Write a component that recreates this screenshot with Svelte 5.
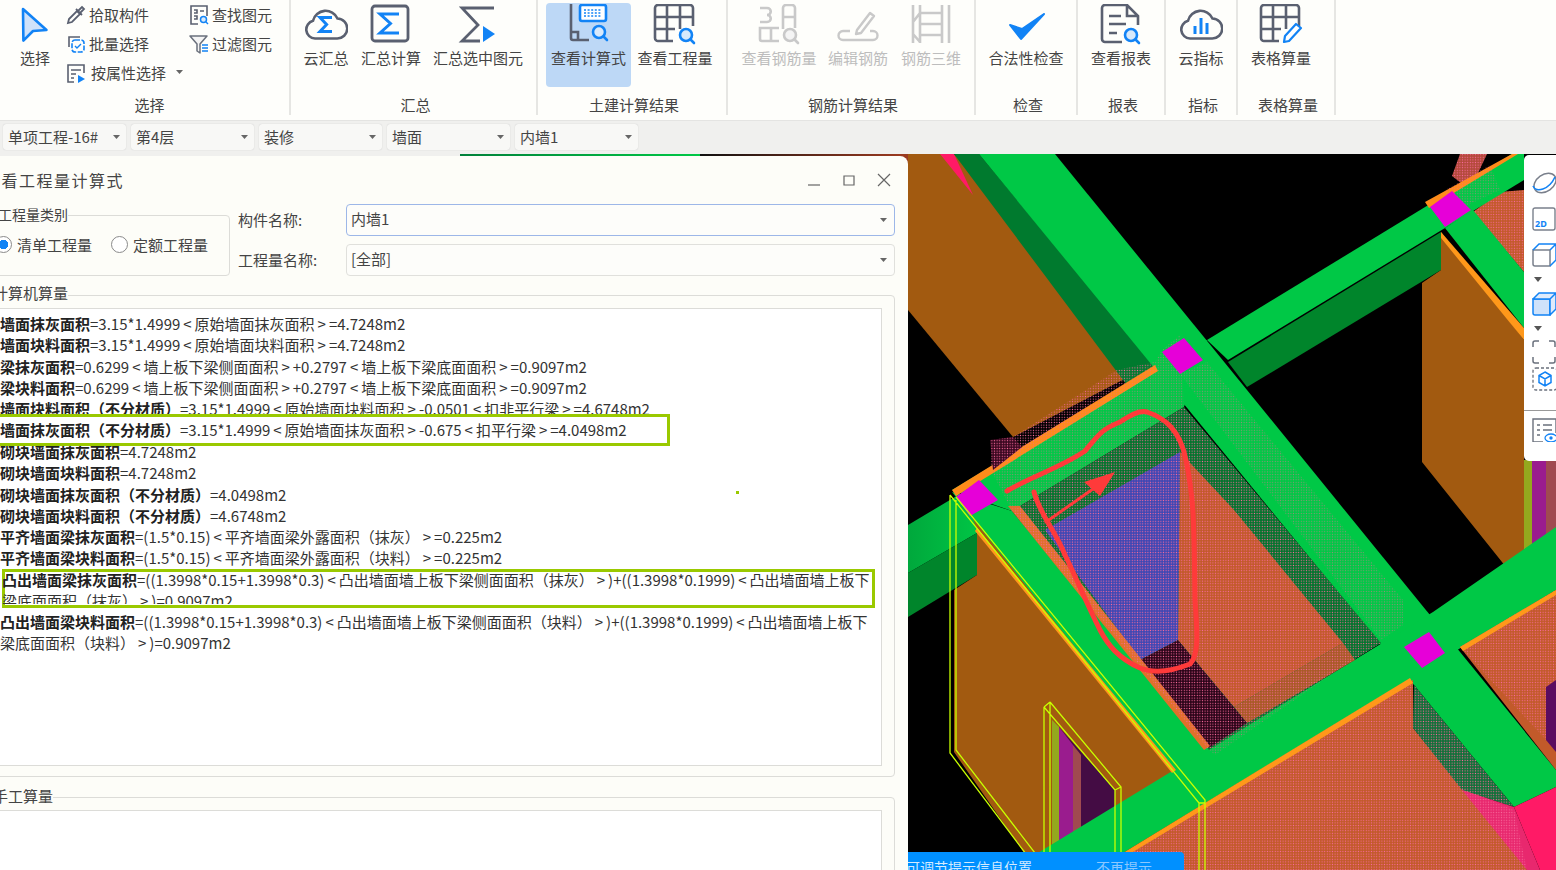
<script lang="ts">
  const groups = [
    { label: '选择', w: 291, items: [{ id: 'select', text: '选择', w: 54 }], small: true },
    { label: '汇总', w: 247, items: [
      { id: 'cloudsum', text: '云汇总', w: 54 },
      { id: 'sum', text: '汇总计算', w: 76 },
      { id: 'sumsel', text: '汇总选中图元', w: 98 },
    ] },
    { label: '土建计算结果', w: 190, items: [
      { id: 'formula', text: '查看计算式', w: 85, active: true },
      { id: 'qty', text: '查看工程量', w: 88 },
    ] },
    { label: '钢筋计算结果', w: 248, items: [
      { id: 'rebar', text: '查看钢筋量', w: 86, off: true },
      { id: 'editbar', text: '编辑钢筋', w: 72, off: true },
      { id: 'bar3d', text: '钢筋三维', w: 74, off: true },
    ] },
    { label: '检查', w: 102, items: [{ id: 'check', text: '合法性检查', w: 84 }] },
    { label: '报表', w: 88, items: [{ id: 'report', text: '查看报表', w: 70 }] },
    { label: '指标', w: 72, items: [{ id: 'cloudbar', text: '云指标', w: 54 }] },
    { label: '表格算量', w: 98, items: [{ id: 'sheet', text: '表格算量', w: 70 }] },
  ];

  const combos = ['单项工程-16#', '第4层', '装修', '墙面', '内墙1'];

  // the program pads its angle brackets, thin spaces get close enough
  const sp = (s: string) => s.replace(/</g, '\u2009<\u2009').replace(/>/g, '\u2009>\u2009');

  const beforeBox = [
    ['墙面抹灰面积', '=3.15*1.4999<原始墙面抹灰面积>=4.7248m2'],
    ['墙面块料面积', '=3.15*1.4999<原始墙面块料面积>=4.7248m2'],
    ['梁抹灰面积', '=0.6299<墙上板下梁侧面面积>+0.2797<墙上板下梁底面面积>=0.9097m2'],
    ['梁块料面积', '=0.6299<墙上板下梁侧面面积>+0.2797<墙上板下梁底面面积>=0.9097m2'],
  ];
  const middle = [
    ['砌块墙面抹灰面积', '=4.7248m2'],
    ['砌块墙面块料面积', '=4.7248m2'],
    ['砌块墙面抹灰面积（不分材质）', '=4.0498m2'],
    ['砌块墙面块料面积（不分材质）', '=4.6748m2'],
    ['平齐墙面梁抹灰面积', '=(1.5*0.15)<平齐墙面梁外露面积（抹灰）>=0.225m2'],
    ['平齐墙面梁块料面积', '=(1.5*0.15)<平齐墙面梁外露面积（块料）>=0.225m2'],
  ];
</script>

{#snippet sigma(x: number, y: number, w: number, h: number)}
  <path d="M{x + w} {y}H{x} l{w * 0.55} {h / 2} l-{w * 0.55} {h / 2} H{x + w}" fill="none" stroke="#1283f5" stroke-width="3" />
{/snippet}

{#snippet lens(cx: number, cy: number, col: string, fill: string)}
  <circle {cx} {cy} r="6" fill={fill} stroke={col} stroke-width="2.6" />
  <path d="M{cx + 4.5} {cy + 4.5}l3.5 3.5" stroke={col} stroke-width="2.6" stroke-linecap="round" />
{/snippet}

{#snippet grid(col: string)}
  <path d="M20 37H5a3 3 0 0 1-3-3V4a3 3 0 0 1 3-3h32a3 3 0 0 1 3 3v18M2 13h38M2 25h20M14 1v36M27 1v24" fill="none" stroke={col} stroke-width="2.6" />
{/snippet}

{#snippet icon(id: string)}
  <svg class="ic" viewBox="0 0 44 44" aria-hidden="true">
    {#if id === 'select'}
      <path d="M10 5L33.5 26L20 27L10.4 36.6Z" fill="#cfe2fa" stroke="#1283f5" stroke-width="2.6" stroke-linejoin="round" />
    {:else if id === 'cloudsum'}
      <path d="M11 34.5a9 9 0 0 1-2-17.7A13 13 0 0 1 33.5 14.5a10 10 0 0 1-.5 20Z" fill="none" stroke="#5a6070" stroke-width="2.6" />
      {@render sigma(16, 13.5, 12, 14)}
    {:else if id === 'sum'}
      <rect x="3" y="2" width="36" height="35" rx="3" fill="none" stroke="#5a6070" stroke-width="2.8" />
      {@render sigma(11, 10, 19, 19)}
    {:else if id === 'sumsel'}
      <path d="M38 4H6l16 17L6 37h18" fill="none" stroke="#5a6070" stroke-width="2.8" />
      <path d="M27 22l12 8-12 8Z" fill="#1283f5" />
    {:else if id === 'formula'}
      <path d="M4 0v34a2 2 0 0 0 2 2h16M4 28h7v8" fill="none" stroke="#5a6070" stroke-width="2.6" />
      <rect x="13" y="1" width="26" height="16" rx="2" fill="#fff" stroke="#1283f5" stroke-width="2.6" />
      <path d="M17 6h18M17 9h18M17 12h18" stroke="#1283f5" stroke-width="1.6" stroke-dasharray="2 1.6" />
      {@render lens(32, 28, '#1283f5', '#d8e9fb')}
    {:else if id === 'qty'}
      {@render grid('#5a6070')}
      {@render lens(33, 31, '#1283f5', '#d8e9fb')}
    {:else if id === 'rebar'}
      <path d="M22 37H5a2 2 0 0 1-2-2V24h19M14 24v13M3 18h7c5 0 5-7 0-7 5 0 5-7 0-7H3M26 25V4a3 3 0 0 1 3-3h6a3 3 0 0 1 3 3v20M26 13h12" fill="none" stroke="#c9c9c9" stroke-width="2.6" />
      {@render lens(33, 31, '#c9c9c9', '#f4f4f4')}
    {:else if id === 'editbar'}
      <path d="M21 26L34 9l4 3-13 17-5 1ZM14 27H7a4 4 0 0 0 0 9h30a4 4 0 0 0 0-9h-3" fill="none" stroke="#c9c9c9" stroke-width="2.4" stroke-linejoin="round" />
    {:else if id === 'bar3d'}
      <path d="M4 1v38M11 1v38M33 1v38M40 1v38M11 9h22M11 20h22M11 31h22M4 18l7-9M4 30l7 8" fill="none" stroke="#c9c9c9" stroke-width="2.6" />
    {:else if id === 'check'}
      <path d="M6 21l11 14L40 10 18 25Z" fill="#1283f5" stroke="#1283f5" stroke-width="2" stroke-linejoin="round" />
    {:else if id === 'report'}
      <path d="M23 38H6a3 3 0 0 1-3-3V4a3 3 0 0 1 3-3h22l11 11v9M28 1v11h11M10 12h12M10 20h17M10 29h8" fill="none" stroke="#5a6070" stroke-width="2.6" />
      {@render lens(32, 31, '#1283f5', '#d8e9fb')}
    {:else if id === 'cloudbar'}
      <path d="M11 34.5a9 9 0 0 1-2-17.7A13 13 0 0 1 33.5 14.5a10 10 0 0 1-.5 20Z" fill="none" stroke="#5a6070" stroke-width="2.6" />
      <path d="M16 22v8M22 14v16M28 19v11" stroke="#1283f5" stroke-width="3" />
    {:else if id === 'sheet'}
      {@render grid('#5a6070')}
      <path d="M25 38l1-6 11-12 5 4-12 13Z" fill="#fff" stroke="#1283f5" stroke-width="2.2" stroke-linejoin="round" />
    {/if}
  </svg>
{/snippet}

{#snippet chev()}
  <svg class="chev" viewBox="0 0 8 5" aria-hidden="true"><path d="M0 0h7L3.5 4Z" fill="#666" /></svg>
{/snippet}

<div class="page">
  <header class="ribbon">
    {#each groups as g}
      <section class="group" style="width:{g.w}px">
        <div class="group-body">
          {#each g.items as b}
            <button class="big" class:active={b.active} class:off={b.off} style="width:{b.w}px">
              {@render icon(b.id)}
              <span>{b.text}</span>
            </button>
          {/each}
          {#if g.small}
            <div class="small-col">
              <div class="small">
                <svg viewBox="0 0 20 20" aria-hidden="true"><path d="M2 18l1-4 8-8 3 3-8 8ZM10 4l6 6M12 6l4-4 2 2-4 4" fill="none" stroke="#5a6070" stroke-width="1.8" /></svg>
                拾取构件
              </div>
              <div class="small">
                <svg viewBox="0 0 20 20" aria-hidden="true"><path d="M3 13V3h11" fill="none" stroke="#5a6070" stroke-width="1.6" /><rect x="6" y="6" width="12" height="12" rx="3" fill="none" stroke="#1283f5" stroke-width="1.6" stroke-dasharray="5 1.5" /><path d="M9 12l2 2 4-4" fill="none" stroke="#1283f5" stroke-width="1.4" /></svg>
                批量选择
              </div>
              <div class="small wide">
                <svg viewBox="0 0 20 20" aria-hidden="true"><path d="M8 19H2V2h16v8M5 7h10M5 11h5M5 15h3" fill="none" stroke="#5a6070" stroke-width="1.6" /><path d="M12 12l7 4-7 4Z" fill="#1283f5" /></svg>
                按属性选择 {@render chev()}
              </div>
            </div>
            <div class="small-col second">
              <div class="small">
                <svg viewBox="0 0 20 20" aria-hidden="true"><path d="M9 19H2V1h16v10M5 5h3v3H5M11 6h4M5 11h3v3H5" fill="none" stroke="#5a6070" stroke-width="1.6" /><circle cx="14.5" cy="14.5" r="3" fill="#d8e9fb" stroke="#1283f5" stroke-width="1.5" /><path d="M17 17l2 2" stroke="#1283f5" stroke-width="1.5" /></svg>
                查找图元
              </div>
              <div class="small">
                <svg viewBox="0 0 20 20" aria-hidden="true"><path d="M1 2h17l-7 8v9l-3-2v-7Z" fill="#f4f4f4" stroke="#6a707c" stroke-width="1.5" stroke-linejoin="round" /><path d="M13 11h6M13 14h6M13 17h6" stroke="#1283f5" stroke-width="1.6" /></svg>
                过滤图元
              </div>
            </div>
          {/if}
        </div>
        <div class="group-label">{g.label}</div>
      </section>
    {/each}
  </header>

  <div class="filters">
    {#each combos as c}
      <div class="combo">{c} {@render chev()}</div>
    {/each}
  </div>

  <main class="main">
    <div class="dialog">
      <div class="title">
        <span>查看工程量计算式</span>
        <div class="win">
          <svg viewBox="0 0 14 14" aria-hidden="true"><path d="M1 12h12" stroke="#666" stroke-width="1.2" /></svg>
          <svg viewBox="0 0 14 14" aria-hidden="true"><path d="M2 3h10v9H2Z" fill="none" stroke="#666" stroke-width="1.2" /></svg>
          <svg viewBox="0 0 14 14" aria-hidden="true"><path d="M1 1l12 12M13 1L1 13" stroke="#666" stroke-width="1.2" /></svg>
        </div>
      </div>

      <div class="form">
        <div class="fs kind">
          <span class="legend">工程量类别</span>
          <label class="radio"><i class="dot on"></i>清单工程量</label>
          <label class="radio"><i class="dot"></i>定额工程量</label>
        </div>
        <div class="fields">
          <div class="field">
            <span class="fname">构件名称:</span>
            <div class="select focus">内墙1 {@render chev()}</div>
          </div>
          <div class="field">
            <span class="fname">工程量名称:</span>
            <div class="select">[全部] {@render chev()}</div>
          </div>
        </div>
      </div>

      <div class="fs calc">
        <span class="legend">计算机算量</span>
        <div class="lines">
          {#each beforeBox as r}
            <div class="row"><b>{r[0]}</b>{sp(r[1])}</div>
          {/each}
          <div class="row cut"><b>墙面块料面积（不分材质）</b>{sp('=3.15*1.4999<原始墙面块料面积>-0.0501<扣非平行梁>=4.6748m2')}</div>
          <div class="mark one">
            <div class="row"><b>墙面抹灰面积（不分材质）</b>{sp('=3.15*1.4999<原始墙面抹灰面积>-0.675<扣平行梁>=4.0498m2')}</div>
          </div>
          {#each middle as r}
            <div class="row"><b>{r[0]}</b>{sp(r[1])}</div>
          {/each}
          <div class="mark two">
            <div class="row"><b>凸出墙面梁抹灰面积</b>{sp('=((1.3998*0.15+1.3998*0.3)<凸出墙面墙上板下梁侧面面积（抹灰）>)+((1.3998*0.1999)<凸出墙面墙上板下')}</div>
            <div class="row cut2">{sp('梁底面面积（抹灰）>)=0.9097m2')}</div>
          </div>
          <div class="row"><b>凸出墙面梁块料面积</b>{sp('=((1.3998*0.15+1.3998*0.3)<凸出墙面墙上板下梁侧面面积（块料）>)+((1.3998*0.1999)<凸出墙面墙上板下')}</div>
          <div class="row">{sp('梁底面面积（块料）>)=0.9097m2')}</div>
          <i class="speck"></i>
        </div>
      </div>

      <div class="fs manual">
        <span class="legend">手工算量</span>
        <div class="lines blank"></div>
      </div>
    </div>

    <div class="viewport">
      <svg class="scene" viewBox="908 154 648 716" preserveAspectRatio="none" aria-hidden="true">
        <defs>
          <pattern id="dots" width="2.6" height="2.6" patternUnits="userSpaceOnUse">
            <circle cx="1.3" cy="1.3" r="0.62" fill="#f7689a" />
          </pattern>
          <linearGradient id="beamfade" x1="0" x2="1" y1="0" y2="0">
            <stop offset="0" stop-color="#00a83c" />
            <stop offset="1" stop-color="#00c846" />
          </linearGradient>
        </defs>

        <!-- back walls -->
        <polygon points="908,154 954,154 1155,363 1013,437 908,310" fill="#a25a10" />
        <polygon points="940,154 954,154 973,195" fill="#ff1a66" />
        <polygon points="954,154 979,154 1160,372 1126,384" fill="#007a2e" />
        <polygon points="1441,232 1524,340 1524,555 1506,567 1422,462 1422,283 1441,270" fill="#a25a10" />
        <polygon points="1524,460 1532,460 1532,552 1524,558" fill="#94a81e" />
        <polygon points="1532,460 1546,460 1546,542 1532,552" fill="#9a1c8e" />
        <polygon points="1546,460 1556,460 1556,535 1546,542" fill="#a04a50" />
        <polygon points="1228,362 1441,232 1441,270 1247,387" fill="#00852b" />
        <polygon points="1460,154 1487,154 1470,190 1452,176" fill="#b34a3a" />
        <polygon points="1460,154 1487,154 1470,190 1452,176" fill="url(#dots)" />
        <polygon points="1473,212 1524,272 1524,190 1500,192" fill="#c25a2a" />
        <polygon points="1473,212 1524,272 1524,190 1500,192" fill="url(#dots)" />

        <!-- left low beam and wall -->
        <polygon points="908,525 960,494 985,520 977,533 908,573" fill="url(#beamfade)" />
        <polygon points="908,573 977,533 977,575 908,617" fill="#00852b" />
        <polygon points="970,510 1190,790 1060,850 1036,870 954,752 954,590 977,575 977,530" fill="#a25a10" />
        <polygon points="1059,727 1115,790 1115,812 1059,846" fill="#440c44" />
        <polygon points="1052,720 1059,727 1059,846 1052,850" fill="#94a81e" />
        <polygon points="1059,727 1073,745 1073,838 1059,846" fill="#9a1c8e" />
        <polygon points="1073,745 1081,755 1081,833 1073,838" fill="#a04a50" />

        <!-- beams -->
        <polygon points="979,154 1055,154 1556,770 1556,787 1514,807" fill="#00c846" />
        <polygon points="1207,340 1512,154 1524,154 1524,180 1228,360" fill="#00c846" />
        <polygon points="1445,228 1473,210 1524,272 1524,328" fill="#00c846" />
        <polygon points="952,490 1155,368 1207,340 1184,407 1012,511" fill="#00c846" />
        <polygon points="952,492 1012,511 1212,752 1207,802 1200,806" fill="#00c846" />
        <polygon points="1010,870 1433,612 1556,527 1556,590 1095,870" fill="#00c846" />

        <!-- orange strips -->
        <polygon points="952,490 1155,365 1158,371 956,496" fill="#ff8c1a" />
        <polygon points="1425,202 1512,154 1518,154 1429,208" fill="#ff8c1a" />
        <polygon points="1441,232 1524,328 1524,340 1441,238" fill="#ff981a" />
        <polygon points="977,528 1176,770 1172,773 975,531" fill="#ff981a" />

        <!-- room under the hatch -->
        <polygon points="1012,511 1184,407 1381,643 1209,750" fill="#00742c" />
        <polygon points="1180,452 1234,510 1343,643 1234,707 1178,640" fill="#c25a2a" />
        <polygon points="1180,452 1178,640 1140,660 1045,530" fill="#3e48b4" />
        <polygon points="1234,707 1343,643 1355,660 1247,723" fill="#a85a25" />
        <polygon points="1178,640 1247,723 1209,748 1140,660" fill="#2a0418" />
        <polygon points="1008,506 1020,506 1210,746 1204,750" fill="#e0702a" />
        <polygon points="1012,511 1184,407 1381,643 1209,750" fill="url(#dots)" />

        <!-- lower right panels -->
        <polygon points="1207,805 1413,680 1413,728 1462,788 1514,810 1527,870 1100,870" fill="#c25a2a" />
        <polygon points="1460,647 1556,590 1556,770" fill="#c25a2a" />
        <polygon points="1546,687 1556,680 1556,752 1546,740" fill="#5a0c60" />
        <polygon points="1414,685 1413,728 1462,790 1514,807" fill="#0f7038" />
        <polygon points="1462,790 1514,807 1540,870 1527,870" fill="#e8286e" />
        <polygon points="1514,807 1556,787 1556,870 1540,870" fill="#ff1a66" />
        <polygon points="1207,805 1413,680 1413,728 1462,788 1514,810 1527,870 1100,870" fill="url(#dots)" />
        <polygon points="1414,685 1413,728 1462,790 1514,807" fill="url(#dots)" />
        <polygon points="1460,647 1556,590 1556,680 1546,687 1546,740" fill="url(#dots)" />
        <polygon points="1095,870 1410,678 1413,683 1103,870" fill="#ff981a" />
        <polygon points="1460,647 1556,590 1556,595 1463,651" fill="#ff981a" />

        <!-- transparent hatch over the beams -->
        <polygon points="990,468 1155,362 1162,350 1180,335 1184,407 1012,511" fill="url(#dots)" opacity="0.55" />
        <polygon points="992,445 1013,437 1117,370 1155,362 990,470" fill="url(#dots)" />
        <polygon points="990,440 1013,437 1022,447 993,470" fill="#3a0820" />
        <polygon points="990,440 1013,437 1022,447 993,470" fill="url(#dots)" />
        <polygon points="1180,374 1207,362 1403,600 1403,625 1215,755 1207,748 1381,640" fill="url(#dots)" opacity="0.55" />
        <polygon points="1445,190 1490,165 1500,190 1452,212" fill="url(#dots)" opacity="0.55" />

        <!-- columns -->
        <polygon points="1184,338 1203,360 1180,374 1162,352" fill="#e600d8" />
        <polygon points="1452,191 1471,210 1445,227 1430,207" fill="#e600d8" />
        <polygon points="979,480 998,500 970,516 956,497" fill="#e600d8" />
        <polygon points="1429,632 1445,653 1422,668 1404,647" fill="#e600d8" />

        <!-- selected wall outlines -->
        <g fill="none" stroke="#c8ff00" stroke-width="1.3">
          <path d="M950 495V753L1038 870M956 500V750L1048 870M950 495L1199 803V870M956 497L1205 800V870M1199 803H1205" />
          <path d="M1044 707V870M1050 702V870M1044 707L1115 790V870M1050 702L1121 787V870M1044 707L1050 702M1115 790L1121 787" />
        </g>

        <!-- hand markup -->
        <g fill="none" stroke="#ff3a3a" stroke-linecap="round" stroke-linejoin="round">
          <path stroke-width="5" d="M1007 491C1030 477 1060 468 1085 451C1098 436 1100 430 1120 422C1132 414 1140 410 1147 412C1165 418 1180 430 1186 460C1194 500 1194 520 1195 600C1198 640 1198 655 1190 664C1165 674 1150 672 1140 668C1118 658 1108 645 1100 630C1085 600 1075 575 1065 555C1055 530 1040 515 1034 492" />
          <path stroke-width="3" d="M1046 522L1100 484" />
        </g>
        <polygon points="1115,472 1084,482 1100,496" fill="#ff3a3a" />
      </svg>

      <aside class="tools">
        <svg viewBox="0 0 24 24" aria-hidden="true"><ellipse cx="13" cy="12" rx="12" ry="8.5" transform="rotate(-35 13 12)" fill="none" stroke="#7a808c" stroke-width="1.5" /><path d="M1 15c3 7 16 4 22-9" fill="none" stroke="#1283f5" stroke-width="1.6" /></svg>
        <svg viewBox="0 0 24 24" aria-hidden="true"><rect x="1" y="1" width="22" height="22" rx="2" fill="none" stroke="#7a808c" stroke-width="1.4" /><text x="3" y="20" class="twod">2D</text></svg>
        <svg class="m10" viewBox="0 0 24 24" aria-hidden="true"><path d="M1 7h17v16H3a2 2 0 0 1-2-2Z" fill="none" stroke="#7a808c" stroke-width="1.5" /><path d="M1 7l6-6h17v16l-6 6M18 7l6-6" fill="none" stroke="#1283f5" stroke-width="1.5" /></svg>
        <svg class="tri" viewBox="0 0 8 5" aria-hidden="true"><path d="M0 0h8L4 5Z" fill="#555" /></svg>
        <svg class="m10" viewBox="0 0 24 24" aria-hidden="true"><path d="M1 7h17v16H3a2 2 0 0 1-2-2Z" fill="#cfe2fa" stroke="#1283f5" stroke-width="1.5" /><path d="M1 7l6-6h17l-6 6ZM18 7l6-6v16l-6 6Z" fill="#dfebfb" stroke="#1283f5" stroke-width="1.5" stroke-linejoin="round" /></svg>
        <svg class="tri t9" viewBox="0 0 8 5" aria-hidden="true"><path d="M0 0h8L4 5Z" fill="#555" /></svg>
        <svg class="m3" viewBox="0 0 24 24" aria-hidden="true"><path d="M1 7V3a2 2 0 0 1 2-2h4M17 1h4a2 2 0 0 1 2 2v4M1 17v4a2 2 0 0 0 2 2h4M17 23h4a2 2 0 0 0 2-2v-4" fill="none" stroke="#6a707c" stroke-width="1.5" /></svg>
        <svg class="m19" viewBox="0 0 24 24" aria-hidden="true"><rect x="1" y="1" width="24" height="22" rx="3" fill="none" stroke="#6a707c" stroke-width="1.3" stroke-dasharray="3 2" /><path d="M13 5l6 3.5v7L13 19l-6-3.5v-7ZM7 8.5l6 3.5 6-3.5M13 12v7" fill="none" stroke="#1283f5" stroke-width="1.5" /></svg>
        <hr />
        <svg viewBox="0 0 24 24" aria-hidden="true"><path d="M11 24H1V1h23v14M5 7h3M11 7h9M5 12h3M11 12h9M5 17h3" fill="none" stroke="#6a707c" stroke-width="1.4" /><ellipse cx="19" cy="20" rx="6" ry="4" fill="#fff" stroke="#1283f5" stroke-width="1.3" /><circle cx="19" cy="20" r="1.7" fill="#1283f5" /></svg>
      </aside>

      <div class="tip"><span class="msg">可调节提示信息位置。</span><span class="later">不再提示</span></div>
    </div>
  </main>
</div>

<style>
  :global(html), :global(body) {
    margin: 0;
    overflow: hidden;
  }

  .page {
    width: 1556px;
    height: 870px;
    overflow: hidden;
    display: flex;
    flex-direction: column;
    font-family: "Noto Sans CJK SC", "Noto Sans", sans-serif;
    color: #444;
    background: #fefefb;
  }

  .ribbon {
    height: 120px;
    flex: none;
    display: flex;
    background: #fefefb;
    padding-bottom: 5px;
    box-sizing: border-box;
  }

  .group {
    height: 115px;
    box-sizing: border-box;
    border-right: 2px solid #e6e6e3;
    display: flex;
    flex-direction: column;
  }

  .group-body {
    height: 95px;
    display: flex;
    align-items: flex-start;
    padding-left: 8px;
  }

  .group-label {
    height: 20px;
    line-height: 20px;
    text-align: center;
    font-size: 15px;
    padding-left: 4px;
  }

  .group:first-child .group-label {
    padding-left: 10px;
  }

  .big {
    height: 84px;
    margin-top: 3px;
    padding: 1px 0 0;
    border: none;
    border-radius: 4px;
    background: none;
    font: inherit;
    font-size: 15px;
    color: #444;
    display: flex;
    flex-direction: column;
    align-items: center;
    white-space: nowrap;
  }

  .big span {
    line-height: 21px;
    margin-top: -1px;
  }

  .big.active {
    background: #bdd8f6;
  }

  .big.off {
    color: #bdbdbd;
  }

  .ic {
    width: 44px;
    height: 44px;
    flex: none;
  }

  .small-col {
    margin-left: 4px;
    width: 123px;
  }

  .small-col.second {
    margin-left: 0;
    width: 90px;
  }

  .small {
    height: 29px;
    display: flex;
    align-items: center;
    gap: 3px;
    font-size: 15px;
    white-space: nowrap;
  }

  .small.wide {
    gap: 5px;
  }

  .small svg:not(.chev) {
    width: 20px;
    height: 20px;
    flex: none;
  }

  .small .chev {
    margin-left: 5px;
  }

  .chev {
    width: 8px;
    height: 5px;
  }

  .filters {
    height: 34px;
    flex: none;
    box-sizing: border-box;
    background: #f0f0ee;
    border-top: 1px solid #e4e4e2;
    display: flex;
    gap: 5px;
    padding: 3px 0 0 3px;
  }

  .combo {
    width: 123px;
    height: 26px;
    box-sizing: border-box;
    background: #f8f8f6;
    border-radius: 3px;
    box-shadow: 0 0 1px #bbb;
    font-size: 15px;
    line-height: 25px;
    padding-left: 5px;
    position: relative;
    white-space: nowrap;
  }

  .combo .chev,
  .select .chev {
    position: absolute;
    right: 5px;
    top: 11px;
  }

  .main {
    flex: 1;
    display: flex;
    min-height: 0;
    background: linear-gradient(90deg, #f0f0ee 460px, #00803a 460px, #00c846 700px, #111 700px, #9a3a20 900px);
  }

  .dialog {
    width: 922px;
    flex: none;
    margin: 2px 0 0 -14px;
    box-sizing: border-box;
    padding-right: 13px;
    background: #fdfdf8;
    border-radius: 0 8px 0 0;
    position: relative;
    z-index: 1;
  }

  .title {
    height: 48px;
    display: flex;
    align-items: center;
    font-size: 16px;
    letter-spacing: 1.5px;
    margin-left: -2px;
    color: #444;
  }

  .win {
    margin: 0 4px 0 auto;
    display: flex;
    gap: 21px;
  }

  .win svg {
    width: 14px;
    height: 14px;
  }

  .form {
    display: flex;
    align-items: flex-start;
  }

  .fs {
    position: relative;
    border: 1px solid #dcdcd8;
    border-radius: 4px;
    box-sizing: border-box;
  }

  .legend {
    position: absolute;
    top: -12px;
    background: #fdfdf8;
    font-size: 15px;
    line-height: 20px;
    white-space: nowrap;
  }

  .kind {
    width: 244px;
    height: 61px;
    margin-top: 11px;
    padding: 0 0 3px 8px;
    display: flex;
    align-items: center;
    flex: none;
  }

  .kind .legend {
    left: 11px;
    font-size: 14px;
  }

  .radio {
    display: flex;
    align-items: center;
    gap: 5px;
    font-size: 15px;
    margin-right: 19px;
    white-space: nowrap;
  }

  .dot {
    width: 17px;
    height: 17px;
    box-sizing: border-box;
    border: 1px solid #8a8a8a;
    border-radius: 50%;
    background: #fff;
    display: block;
  }

  .dot.on {
    background: radial-gradient(circle, #1283f5 0 4.5px, #fff 5px);
  }

  .fields {
    flex: 1;
    margin-left: 8px;
    display: flex;
    flex-direction: column;
    gap: 8px;
  }

  .field {
    display: flex;
    align-items: center;
    height: 32px;
  }

  .fname {
    width: 108px;
    flex: none;
    font-size: 15px;
    margin-top: -1px;
  }

  .select {
    flex: 1;
    height: 32px;
    box-sizing: border-box;
    border: 1px solid #e0e0dc;
    border-radius: 4px;
    background: #fdfdfa;
    font-size: 15px;
    line-height: 28px;
    padding-left: 4px;
    position: relative;
  }

  .select.focus {
    border-color: #9db7e8;
  }

  .select .chev {
    top: 13px;
    right: 6px;
  }

  .calc {
    margin-top: 19px;
    height: 482px;
    padding: 12px 12px 10px 0;
  }

  .calc .legend {
    left: 6px;
    top: -13px;
  }

  .lines {
    height: 100%;
    box-sizing: border-box;
    border: 1px solid #dcdcd8;
    background: #fff;
    padding: 4px 0 0 12px;
    position: relative;
    overflow: hidden;
  }

  .row {
    height: 21.25px;
    line-height: 21.25px;
    font-size: 15px;
    white-space: nowrap;
    color: #333;
  }

  .row b {
    font-weight: 700;
    color: #222;
  }

  .row.cut {
    height: 16px;
    overflow: hidden;
  }

  .mark {
    box-sizing: border-box;
    border: 3px solid #9ac900;
    background: #fff;
    position: relative;
  }

  .mark.one {
    height: 32px;
    width: 690px;
    margin: 0 0 -5px -20px;
    padding: 2px 0 0 17px;
  }

  .mark.two {
    height: 39px;
    width: 873px;
    margin: 0 0 3.5px 2px;
  }

  .mark.two .row:first-child {
    margin: -2.5px 0 0 -3px;
  }

  .row.cut2 {
    margin-left: -3px;
    height: 13.5px;
    overflow: hidden;
  }

  .speck {
    position: absolute;
    left: 748px;
    top: 182px;
    width: 3px;
    height: 3px;
    background: #9ac900;
  }

  .manual {
    margin-top: 20px;
    height: 140px;
    padding: 12px 12px 0 0;
  }

  .manual .legend {
    left: 6px;
  }

  .blank {
    padding: 0;
  }

  .viewport {
    flex: 1;
    position: relative;
    background: #000;
    overflow: hidden;
  }

  .scene {
    display: block;
    width: 648px;
    height: 716px;
  }

  .tools {
    position: absolute;
    top: 1px;
    right: 0;
    width: 32px;
    height: 306px;
    box-sizing: border-box;
    overflow: hidden;
    background: #fff;
    border-radius: 5px 0 0 5px;
    padding: 16px 0 0 8px;
    display: flex;
    flex-direction: column;
  }

  .tools svg {
    width: 24px;
    height: 24px;
    flex: none;
    margin-bottom: 12px;
  }

  .tools svg.m10 {
    margin-bottom: 10px;
  }

  .tools svg.m3 {
    margin-bottom: 3px;
  }

  .tools svg.m19 {
    margin-bottom: 19px;
  }

  .tools svg.tri {
    width: 8px;
    height: 5px;
    margin: 0 0 10px 2px;
  }

  .tools svg.tri.t9 {
    margin-bottom: 9px;
  }

  .tools hr {
    width: 32px;
    margin: 0 0 7px -8px;
    border: none;
    border-top: 1px solid #999;
    flex: none;
  }

  .twod {
    font: 700 9px "Noto Sans", sans-serif;
    fill: #1283f5;
  }

  .tip {
    position: absolute;
    left: 0;
    bottom: 0;
    width: 276px;
    height: 18px;
    overflow: hidden;
    background: #0090ff;
    border-radius: 0 4px 0 0;
    color: #d4ebff;
    font-size: 14px;
    line-height: 30px;
    white-space: nowrap;
  }

  .tip .msg {
    margin-left: -2px;
  }

  .tip .later {
    margin-left: 50px;
    color: #8cc8ff;
  }
</style>
